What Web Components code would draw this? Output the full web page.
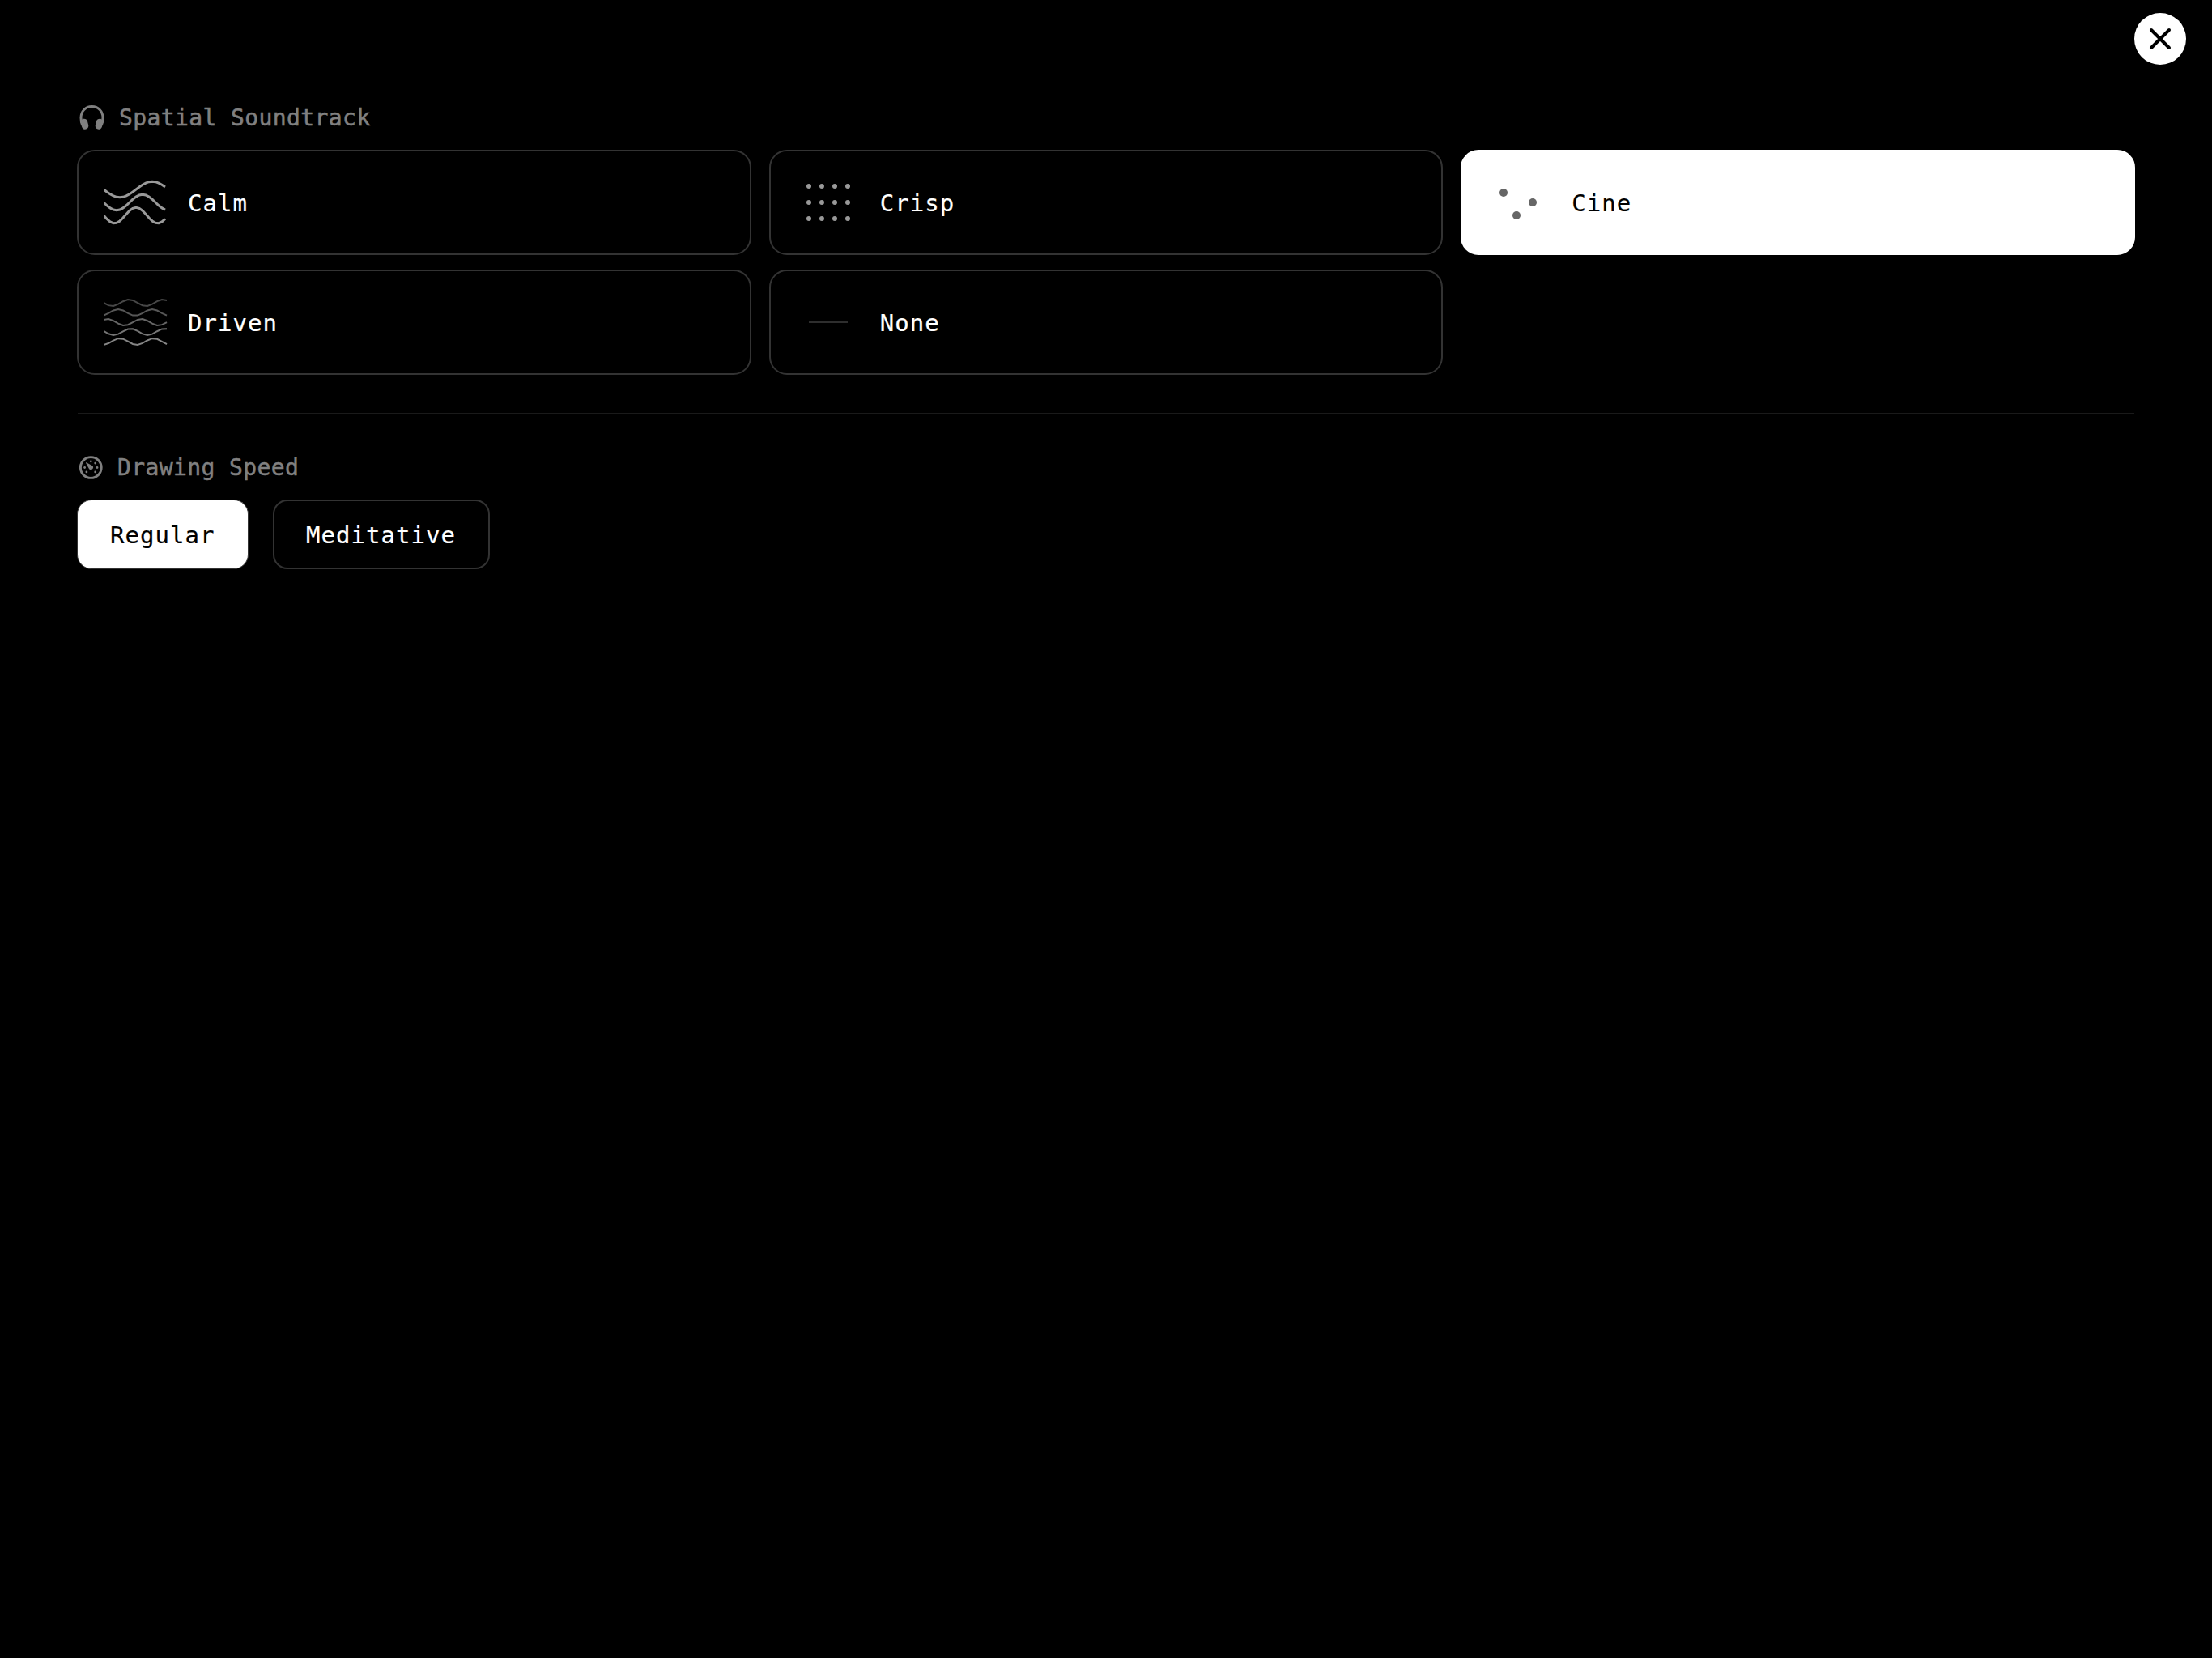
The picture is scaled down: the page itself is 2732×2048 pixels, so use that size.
<!DOCTYPE html>
<html lang="en">
<head>
<meta charset="UTF-8">
<title>Settings</title>
<style>
  body {
    margin: 0;
    background: #000;
  }
</style>
</head>
<body>
<settings-sheet>
  <close-button slot="action"></close-button>

  <settings-section heading="Spatial Soundtrack" icon="headphones">
    <option-grid>
      <soundtrack-card wave="calm">Calm</soundtrack-card>
      <soundtrack-card wave="crisp">Crisp</soundtrack-card>
      <soundtrack-card wave="cine" selected>Cine</soundtrack-card>
      <soundtrack-card wave="driven">Driven</soundtrack-card>
      <soundtrack-card wave="none">None</soundtrack-card>
    </option-grid>
  </settings-section>

  <settings-divider></settings-divider>

  <settings-section heading="Drawing Speed" icon="gauge">
    <option-row>
      <speed-button selected>Regular</speed-button>
      <speed-button>Meditative</speed-button>
    </option-row>
  </settings-section>
</settings-sheet>

<script>
const ICONS = {
  headphones: `
    <svg width="31" height="30" viewBox="-0.5 0 31 30">
      <path d="M3.2 24.5C1.8 21.5 1.5 18.4 1.5 15.4C1.5 7.3 7.2 1.6 15 1.6S28.5 7.3 28.5 15.4C28.5 18.4 28.2 21.5 26.8 24.5" fill="none" stroke="currentColor" stroke-width="3"/>
      <rect x="1.8" y="16.600" width="8.400" height="13.200" rx="4.200" transform="rotate(-14 6 23.200)" fill="currentColor"/>
      <rect x="19.800" y="16.600" width="8.400" height="13.200" rx="4.200" transform="rotate(14 24 23.200)" fill="currentColor"/>
    </svg>`,
  gauge: `
    <svg width="29" height="30" viewBox="0.7 -0.5 29 30">
      <circle cx="15" cy="15" r="12.900" fill="none" stroke="currentColor" stroke-width="2.900"/>
      <path d="M9.300 8.700Q8.400 8.400 8.700 9.300L12.800 16.800A2.700 2.700 0 1 0 16.800 12.800Z" fill="currentColor"/>
      <g fill="currentColor">
        <circle cx="15" cy="7.300" r="1.400"/>
        <circle cx="20.400" cy="9.600" r="1.400"/>
        <circle cx="22.700" cy="15" r="1.400"/>
        <circle cx="20.400" cy="20.400" r="1.400"/>
        <circle cx="9.600" cy="20.400" r="1.400"/>
        <circle cx="7.300" cy="15" r="1.400"/>
      </g>
    </svg>`
};

// Polyline for a sine wave, sampled every `step` pixels
function sinePath(centerY, amplitude, frequency, phase, step, endX) {
  let d = `M0 ${centerY}`;
  for (let x = 0; x <= endX; x += step) {
    const y = centerY + Math.sin(x * frequency + phase) * amplitude;
    d += `L${x} ${y.toFixed(2)}`;
  }
  return d;
}

const WAVES = {
  calm() {
    return [1, 1.25, 1.5].map((k, i) =>
      `<path d="${sinePath(14 + i * 16, 9.8, k * Math.PI / 40, 0, 4, 76)}" fill="none" stroke="#999" stroke-width="3"/>`
    ).join('');
  },
  crisp() {
    let dots = '';
    for (const y of [10, 30, 50]) {
      for (const x of [16, 32, 48, 64]) {
        dots += `<circle cx="${x}" cy="${y}" r="3" fill="#999"/>`;
      }
    }
    return dots;
  },
  cine() {
    return [[20, 18], [36, 46], [56, 30]].map(([x, y]) =>
      `<circle cx="${x}" cy="${y}" r="5" fill="#666"/>`
    ).join('');
  },
  driven() {
    return ['#474747', '#575757', '#666', '#757575', '#858585'].map((color, i) =>
      `<path d="${sinePath(6 + i * 12, 4, 0.15, i * 2, 6, 78)}" fill="none" stroke="${color}" stroke-width="2"/>`
    ).join('');
  },
  none() {
    return '<path d="M16 30H64" stroke="#2e2e2e" stroke-width="2"/>';
  }
};

class SettingsSheet extends HTMLElement {
  constructor() {
    super();
    this.attachShadow({ mode: 'open' });
    this.shadowRoot.innerHTML = `
      <style>
        :host {
          display: block;
          box-sizing: border-box;
          min-height: 2048px;
          background: #000;
          color: #fff;
          font-family: "DejaVu Sans Mono", "Liberation Mono", monospace;
        }

        header {
          display: flex;
          justify-content: flex-end;
          padding: 16px 32px 0 0;
        }

        main {
          padding: 45px 95px 0;
        }
      </style>
      <header><slot name="action"></slot></header>
      <main><slot></slot></main>
    `;
  }
}

class CloseButton extends HTMLElement {
  constructor() {
    super();
    this.attachShadow({ mode: 'open' });
    this.shadowRoot.innerHTML = `
      <style>
        :host {
          display: block;
        }

        button {
          display: flex;
          align-items: center;
          justify-content: center;
          width: 64px;
          height: 64px;
          padding: 0;
          border: none;
          border-radius: 50%;
          background: #fff;
          color: #000;
          cursor: pointer;
        }
      </style>
      <button aria-label="Close">
        <svg width="32" height="32" viewBox="0 0 32 32">
          <path d="M5 5L27 27M27 5L5 27" stroke="currentColor" stroke-width="4" stroke-linecap="round"/>
        </svg>
      </button>
    `;
  }
}

class SettingsDivider extends HTMLElement {
  constructor() {
    super();
    this.attachShadow({ mode: 'open' });
    this.shadowRoot.innerHTML = `
      <style>
        :host {
          display: block;
          height: 2px;
          margin: 47px 1px 45px;
          background: #1a1a1a;
        }
      </style>
    `;
  }
}

class SettingsSection extends HTMLElement {
  constructor() {
    super();
    this.attachShadow({ mode: 'open' });
  }

  connectedCallback() {
    const icon = this.getAttribute('icon');
    this.shadowRoot.innerHTML = `
      <style>
        :host {
          display: block;
        }

        h2 {
          display: flex;
          align-items: center;
          gap: 18px;
          height: 40px;
          margin: 0 0 20px;
          padding-left: 3px;
          color: #808080;
          font-size: 28px;
          font-weight: 400;
          letter-spacing: 0.4px;
          -webkit-text-stroke: 0.5px currentColor;
        }

        svg {
          display: block;
        }
      </style>
      <h2>${ICONS[icon]}<span>${this.getAttribute('heading')}</span></h2>
      <slot></slot>
    `;
  }
}

class OptionGrid extends HTMLElement {
  constructor() {
    super();
    this.attachShadow({ mode: 'open' });
    this.shadowRoot.innerHTML = `
      <style>
        :host {
          display: grid;
          grid-template-columns: repeat(3, 1fr);
          gap: 18px 22px;
        }
      </style>
      <slot></slot>
    `;
  }
}

class OptionRow extends HTMLElement {
  constructor() {
    super();
    this.attachShadow({ mode: 'open' });
    this.shadowRoot.innerHTML = `
      <style>
        :host {
          display: flex;
          gap: 30px;
        }
      </style>
      <slot></slot>
    `;
  }
}

class SoundtrackCard extends HTMLElement {
  constructor() {
    super();
    this.attachShadow({ mode: 'open' });
  }

  connectedCallback() {
    const wave = WAVES[this.getAttribute('wave')];
    this.shadowRoot.innerHTML = `
      <style>
        :host {
          display: flex;
          align-items: center;
          box-sizing: border-box;
          height: 130px;
          padding-left: 31px;
          border: 2px solid #333;
          border-radius: 22px;
          font-size: 29px;
          letter-spacing: 1.04px;
          -webkit-text-stroke: 0.2px currentColor;
          cursor: pointer;
        }

        :host([selected]) {
          border-color: #fff;
          background: #fff;
          color: #000;
        }

        svg {
          display: block;
          margin-right: 24px;
        }

        span {
          padding-top: 2px;
        }
      </style>
      <svg width="80" height="60" viewBox="0 0 80 60">${wave()}</svg>
      <span><slot></slot></span>
    `;
  }
}

class SpeedButton extends HTMLElement {
  constructor() {
    super();
    this.attachShadow({ mode: 'open' });
    this.shadowRoot.innerHTML = `
      <style>
        :host {
          display: flex;
          align-items: center;
          box-sizing: border-box;
          height: 86px;
          padding: 2px 39.5px 0;
          border: 2px solid #333;
          border-radius: 18px;
          font-size: 29px;
          letter-spacing: 1.04px;
          -webkit-text-stroke: 0.2px currentColor;
          cursor: pointer;
        }

        :host([selected]) {
          padding: 2px 40px 0;
          border-width: 1px;
          background: #fff;
          color: #000;
        }
      </style>
      <slot></slot>
    `;
  }
}

customElements.define('settings-sheet', SettingsSheet);
customElements.define('close-button', CloseButton);
customElements.define('settings-divider', SettingsDivider);
customElements.define('settings-section', SettingsSection);
customElements.define('option-grid', OptionGrid);
customElements.define('option-row', OptionRow);
customElements.define('soundtrack-card', SoundtrackCard);
customElements.define('speed-button', SpeedButton);
</script>
</body>
</html>
